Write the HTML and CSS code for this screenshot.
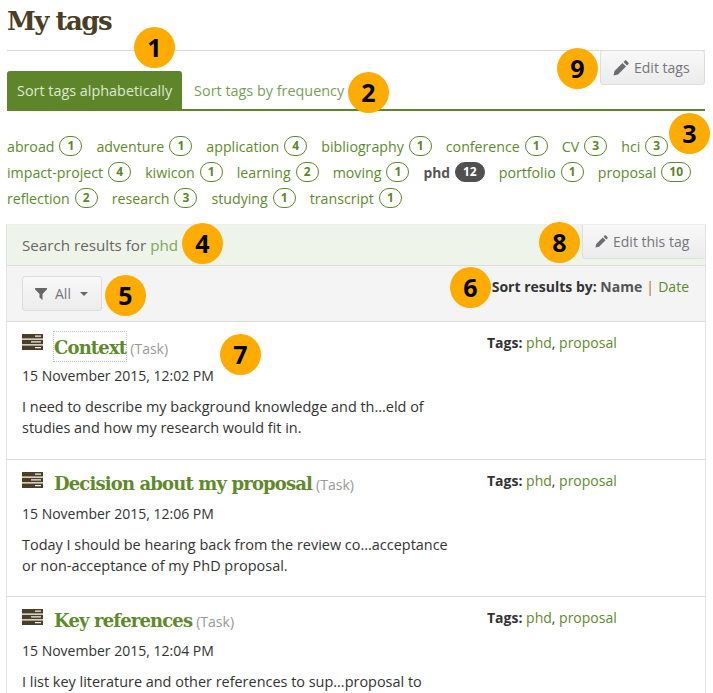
FILE: index.html
```html
<!DOCTYPE html>
<html lang="en">
<head>
  <meta charset="UTF-8" />
  <title>My tags</title>
  <link rel="stylesheet" href="styles.css">
</head>
<body>
  <svg width="0" height="0" class="defs">
    <symbol id="pencil" viewBox="0 0 16 16">
      <path d="M0.5 15.500l1-4.500 8-8 3.500 3.500-8 8zM10.500 2l1.300-1.300c.5-.5 1.200-.5 1.700 0l1.800 1.800c.5.5.5 1.200 0 1.700L14 5.500z"/>
    </symbol>
    <symbol id="task" viewBox="0 0 21 16">
      <path d="M0 0h21v4.500h-21zM0 5.700h21v4.500h-21zM0 11.400h21v4.600h-21z"/>
      <path fill="#eee" d="M13 1.500h6v1.200h-6zM9 7.200h10v1.200h-10zM13 13h6v1.200h-6z"/>
    </symbol>
  </svg>

  <h1 class="page-title">My tags</h1>

  <div class="tabbar">
    <ul class="tabs">
      <li class="tab active">Sort tags alphabetically</li>
      <li class="tab">Sort tags by frequency</li>
    </ul>
    <a class="btn edit-tags"><svg class="btn-icon"><use href="#pencil"/></svg>Edit tags</a>
  </div>

  <ul class="tag-list">
    <li><a>abroad</a><span class="count">1</span></li>
    <li><a>adventure</a><span class="count">1</span></li>
    <li><a>application</a><span class="count">4</span></li>
    <li><a>bibliography</a><span class="count">1</span></li>
    <li><a>conference</a><span class="count">1</span></li>
    <li><a>CV</a><span class="count">3</span></li>
    <li><a>hci</a><span class="count">3</span></li>
    <li><a>impact-project</a><span class="count">4</span></li>
    <li><a>kiwicon</a><span class="count">1</span></li>
    <li><a>learning</a><span class="count">2</span></li>
    <li><a>moving</a><span class="count">1</span></li>
    <li class="current"><a>phd</a><span class="count">12</span></li>
    <li><a>portfolio</a><span class="count">1</span></li>
    <li><a>proposal</a><span class="count">10</span></li>
    <li><a>reflection</a><span class="count">2</span></li>
    <li><a>research</a><span class="count">3</span></li>
    <li><a>studying</a><span class="count">1</span></li>
    <li><a>transcript</a><span class="count">1</span></li>
  </ul>

  <div class="results">
    <div class="results-head">
      <h2>Search results for <a>phd</a></h2>
      <a class="btn edit-tag"><svg class="btn-icon small"><use href="#pencil"/></svg>Edit this tag</a>
    </div>
    <div class="results-tools">
      <a class="btn filter">
        <svg class="filter-icon" viewBox="0 0 12 12"><path d="M0 0h12v1.200l-4.500 4.800v6l-3-2.500v-3.500l-4.500-4.800z"/></svg>
        All
        <span class="caret"></span>
      </a>
      <div class="sort"><strong>Sort results by:</strong> <b>Name</b> <span class="sep">|</span> <a>Date</a></div>
    </div>

    <div class="result">
      <div>
        <div class="result-title">
          <svg class="task-icon"><use href="#task"/></svg>
          <a class="title focused">Context</a> <span class="type">(Task)</span>
        </div>
        <div class="date">15 November 2015, 12:02 PM</div>
        <p>I need to describe my background knowledge and th...eld of studies and how my research would fit in.</p>
      </div>
      <div class="result-tags"><strong>Tags:</strong> <a>phd</a>, <a>proposal</a></div>
    </div>

    <div class="result">
      <div>
        <div class="result-title">
          <svg class="task-icon"><use href="#task"/></svg>
          <a class="title">Decision about my proposal</a> <span class="type">(Task)</span>
        </div>
        <div class="date">15 November 2015, 12:06 PM</div>
        <p>Today I should be hearing back from the review co...acceptance or non-acceptance of my PhD proposal.</p>
      </div>
      <div class="result-tags"><strong>Tags:</strong> <a>phd</a>, <a>proposal</a></div>
    </div>

    <div class="result">
      <div>
        <div class="result-title">
          <svg class="task-icon"><use href="#task"/></svg>
          <a class="title">Key references</a> <span class="type">(Task)</span>
        </div>
        <div class="date">15 November 2015, 12:04 PM</div>
        <p>I list key literature and other references to sup...proposal to</p>
      </div>
      <div class="result-tags"><strong>Tags:</strong> <a>phd</a>, <a>proposal</a></div>
    </div>
  </div>

  <span class="marker m1">1</span>
  <span class="marker m2">2</span>
  <span class="marker m3">3</span>
  <span class="marker m4">4</span>
  <span class="marker m5">5</span>
  <span class="marker m6">6</span>
  <span class="marker m7">7</span>
  <span class="marker m8">8</span>
  <span class="marker m9">9</span>
</body>
</html>
```

FILE: styles.css
```css
html, body {
  height: 693px;
  overflow: hidden;
}
body {
  position: relative;
  margin: 0;
  padding: 0 8px 0 7px;
  background: #fff;
  color: #333;
  font-family: "Open Sans", sans-serif;
  font-size: 14px;
}
a {
  color: #5f8a2c;
}
.defs {
  position: absolute;
}
.page-title {
  margin: 0;
  height: 51px;
  box-sizing: border-box;
  border-bottom: 1px solid #d9d9d9;
  padding-top: 3px;
  font-family: "DejaVu Serif", serif;
  font-size: 26px;
  line-height: 36px;
  letter-spacing: -1.5px;
  color: #4a3f24;
}
.tabbar {
  display: flex;
  justify-content: space-between;
  align-items: flex-start;
  height: 60px;
  box-sizing: border-box;
  border-bottom: 2px solid #5e8529;
}
.tabs {
  display: flex;
  gap: 2px;
  list-style: none;
  margin: 20px 0 0;
  padding: 0;
}
.tab {
  height: 38px;
  padding: 0 10px;
  font-size: 14.400px;
  line-height: 39px;
  color: #7d9c58;
}
.tab.active {
  background: #5e8529;
  color: #dfe8d2;
  border-radius: 3px 3px 0 0;
}
.btn {
  display: flex;
  align-items: center;
  box-sizing: border-box;
  border: 1px solid #ddd;
  border-radius: 3px;
  background: linear-gradient(#f8f8f8, #ececec);
  color: #75757c;
  font-size: 14px;
}
.btn-icon {
  width: 16px;
  height: 16px;
  margin-right: 5px;
  fill: #6b6b70;
}
.btn-icon.small {
  width: 13px;
  height: 13px;
}
.edit-tags {
  width: 105px;
  height: 35px;
  margin-top: -1px;
  padding-left: 12px;
}
.tag-list {
  display: flex;
  flex-wrap: wrap;
  gap: 6px 14px;
  list-style: none;
  margin: 0;
  padding: 25px 0 0;
  font-size: 14.200px;
}
.tag-list li {
  display: flex;
  align-items: center;
  gap: 5px;
  height: 20px;
}
.tag-list .current a {
  color: #555;
  font-weight: 700;
  font-size: 13.800px;
}
.count {
  min-width: 23px;
  height: 20px;
  box-sizing: border-box;
  padding: 0 7px;
  border: 1px solid #5e8529;
  border-radius: 10px;
  color: #5e8529;
  font-size: 12px;
  font-weight: 700;
  line-height: 18px;
  text-align: center;
}
.current .count {
  background: #505050;
  border-color: #505050;
  color: #fff;
}
.results {
  margin: 16px -1px 0;
  border: 1px solid #e4e4e4;
  border-top-color: #eee;
  border-bottom: 0;
}
.results-head {
  display: flex;
  justify-content: space-between;
  height: 41px;
  box-sizing: border-box;
  background: #eff4ea;
  border-bottom: 1px solid #ddd;
}
.results-head h2 {
  margin: 0;
  padding-left: 15px;
  font-size: 15.200px;
  font-weight: 400;
  line-height: 40px;
  color: #666;
}
.results-head h2 a {
  color: #7fa65a;
}
.edit-tag {
  width: 123px;
  height: 34px;
  padding-left: 12px;
  border-width: 0 0 1px 1px;
  border-radius: 0 0 3px 3px;
}
.results-tools {
  display: flex;
  justify-content: space-between;
  height: 56px;
  box-sizing: border-box;
  padding: 10px 16px 10px 15px;
  background: #f4f4f4;
  border-bottom: 1px solid #ddd;
}
.filter {
  gap: 8px;
  width: 80px;
  height: 35px;
  padding-left: 12px;
}
.filter-icon {
  width: 12px;
  height: 12px;
  fill: #65656a;
}
.caret {
  width: 0;
  height: 0;
  margin-left: 1px;
  border: 4.500px solid transparent;
  border-top-color: #65656a;
  border-bottom: 0;
}
.sort {
  padding-top: 1px;
  line-height: 20px;
}
.sort b {
  color: #555;
}
.sep {
  color: #b5662f;
  margin: 0 .5px;
}
.result {
  display: grid;
  grid-template-columns: 465px 1fr;
  height: 137px;
  box-sizing: border-box;
  padding: 10px 15px 0;
  border-bottom: 1px solid #ddd;
}
.results-tools + .result {
  height: 138px;
}
.result-title {
  display: flex;
  align-items: baseline;
  gap: 4px;
  height: 34px;
  line-height: 27px;
}
.task-icon {
  align-self: flex-start;
  flex: none;
  width: 21px;
  height: 16px;
  margin: 2px 7px 0 0;
  fill: #4a3f24;
}
.title {
  font-family: "DejaVu Serif", serif;
  font-size: 18px;
  font-weight: 700;
  letter-spacing: -0.85px;
}
.title.focused {
  padding-top: 2px;
  outline: 1px dotted #b8c4cc;
}
.type {
  color: #999;
  font-size: 14px;
}
.date {
  line-height: 20px;
}
.result p {
  margin: 10px 0 0;
  width: 440px;
  font-size: 14.450px;
  line-height: 21px;
}
.result-tags {
  line-height: 22px;
}
.marker {
  position: absolute;
  width: 41px;
  height: 41px;
  border-radius: 50%;
  background: #ffab00;
  color: #000;
  font-size: 25px;
  font-weight: 700;
  line-height: 41px;
  text-align: center;
}
.m1 { left: 134px; top: 27px; }
.m2 { left: 348px; top: 72px; }
.m3 { left: 669px; top: 113px; }
.m4 { left: 182px; top: 223px; }
.m5 { left: 105px; top: 275px; }
.m6 { left: 450px; top: 267px; }
.m7 { left: 220px; top: 334px; }
.m8 { left: 539px; top: 222px; }
.m9 { left: 557px; top: 48px; }
```
